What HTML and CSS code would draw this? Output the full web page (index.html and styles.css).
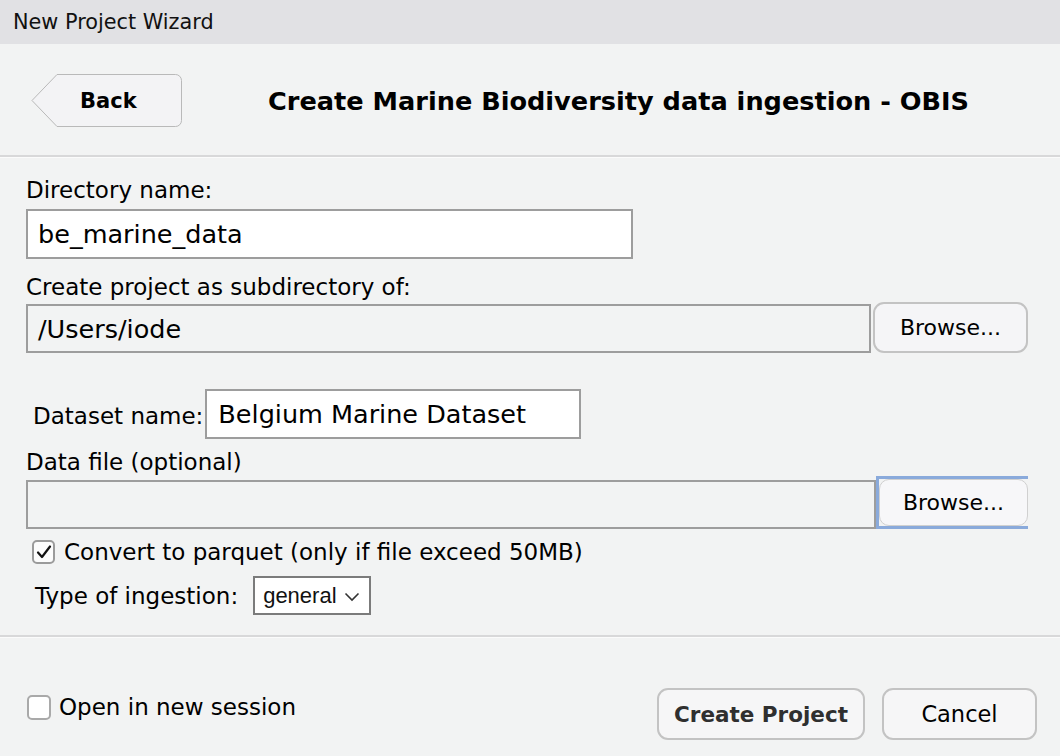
FILE: index.html
```html
<!DOCTYPE html>
<html lang="en">
<head>
<meta charset="utf-8">
<title>New Project Wizard</title>
<link rel="stylesheet" href="styles.css">
</head>
<body>
<div class="window">
  <div class="titlebar">New Project Wizard</div>
  <div class="header">
    <button class="back">
      <svg class="back-shape" width="152" height="54" viewBox="0 0 152 54">
        <path d="M26 0.5 H144.5 a6 6 0 0 1 6 6 V46.5 a6 6 0 0 1 -6 6 H26 L1 26.5 Z" fill="#f3f3f5" stroke="#b9b9b9" stroke-width="1"/>
      </svg>
      <span class="back-label">Back</span>
    </button>
    <h1 class="title">Create Marine Biodiversity data ingestion - OBIS</h1>
  </div>
  <div class="sep"></div>
  <div class="form">
    <div class="lbl l1">Directory name:</div>
    <div class="field white dir">be_marine_data</div>
    <div class="lbl l2">Create project as subdirectory of:</div>
    <div class="row r2">
      <div class="field path">/Users/iode</div>
      <button class="btn browse">Browse...</button>
    </div>
    <div class="row ds">
      <span class="lbl">Dataset name:</span>
      <div class="field white dsname">Belgium Marine Dataset</div>
    </div>
    <div class="lbl l3">Data file (optional)</div>
    <div class="row r4">
      <div class="field file"></div>
      <div class="focus"><button class="btn browse2">Browse...</button></div>
    </div>
    <div class="check-row">
      <span class="cb checked"><svg width="16" height="14" viewBox="0 0 16 14"><polyline points="2,7.5 6,12 14,1.5" fill="none" stroke="#111" stroke-width="2.2" stroke-linecap="round" stroke-linejoin="round"/></svg></span>
      <span class="lbl">Convert to parquet (only if file exceed 50MB)</span>
    </div>
    <div class="type-row">
      <span class="lbl">Type of ingestion:</span>
      <div class="select">general
        <svg class="chev" width="16" height="10" viewBox="0 0 16 10"><polyline points="1.5,1.5 8,8 14.5,1.5" fill="none" stroke="#333" stroke-width="1.6"/></svg>
      </div>
    </div>
  </div>
  <div class="sep"></div>
  <div class="footer">
    <div class="open-row">
      <span class="cb"></span>
      <span class="lbl">Open in new session</span>
    </div>
    <div class="actions">
      <button class="btn create">Create Project</button>
      <button class="btn cancel">Cancel</button>
    </div>
  </div>
</div>
</body>
</html>
```

FILE: styles.css
```css
* { box-sizing: border-box; }
html, body { margin: 0; padding: 0; }
body {
  width: 1060px;
  height: 756px;
  overflow: hidden;
  background: #f2f3f3;
  font-family: "DejaVu Sans", "Liberation Sans", sans-serif;
  color: #000;
}
.window { width: 1060px; height: 756px; display: flex; flex-direction: column; }

.titlebar {
  height: 44px;
  background: #e1e1e4;
  padding-left: 13px;
  display: flex;
  align-items: center;
  font-size: 20.8px;
  color: #111;
}

.header {
  height: 111px;
  display: flex;
  align-items: center;
  padding-left: 31px;
}
.back {
  position: relative;
  width: 152px;
  height: 54px;
  margin-top: 3px;
  padding: 0;
  border: none;
  background: transparent;
  font-family: inherit;
  cursor: pointer;
}
.back-shape { position: absolute; left: 0; top: 0; }
.back-label {
  position: relative;
  display: block;
  font-size: 21px;
  font-weight: bold;
  margin-left: 49px;
  text-align: left;
  color: #000;
}
.title {
  margin: 3px 0 0 85px;
  font-size: 25.6px;
  font-weight: bold;
  color: #000;
}

.sep {
  height: 3px;
  border-top: 2px solid #d8d8d9;
  border-bottom: 1px solid #fbfbfb;
  flex: none;
}

.form {
  padding: 0 32px 20px 26px;
  display: flex;
  flex-direction: column;
}
.lbl { font-size: 23px; line-height: 26px; white-space: nowrap; }
.l1 { margin-top: 19px; }
.field {
  border: 2px solid #9d9d9d;
  font-size: 25.5px;
  padding-left: 10px;
  display: flex;
  align-items: center;
  white-space: nowrap;
}
.white { background: #fff; }
.dir { margin-top: 6px; width: 607px; height: 50px; }
.l2 { margin-top: 15px; }
.row { display: flex; }
.r2 { margin-top: 2px; align-items: flex-start; }
.path { margin-top: 2px; width: 845px; height: 49px; background: #f2f3f3; }

.btn {
  font-family: inherit;
  font-size: 22px;
  color: #000;
  background: #f5f5f7;
  border: 2px solid #c3c3c3;
  border-radius: 11px;
  padding: 0;
}
.browse { margin-left: 2px; width: 155px; height: 51px; }

.ds { margin-top: 36px; align-items: center; padding-left: 7px; }
.ds .lbl { margin-top: 3px; }
.dsname { margin-left: 2px; width: 376px; height: 50px; padding-left: 11px; }

.l3 { margin-top: 10px; }
.r4 { margin-top: 1px; align-items: flex-start; }
.file { margin-top: 4px; width: 850px; height: 49px; background: #f2f3f3; }
.focus {
  width: 152px;
  height: 53px;
  border: 3px solid #8aaadb;
  border-right: none;
  display: flex;
}
.browse2 {
  width: 149px;
  height: 47px;
  border: 1px solid #d0d0d0;
  border-radius: 10px;
  background: #f7f7f9;
}

.check-row {
  margin-top: 10px;
  padding-left: 6px;
  display: flex;
  align-items: center;
  gap: 9px;
}
.cb {
  width: 24px;
  height: 24px;
  border: 2px solid #a9a9a9;
  border-radius: 5px;
  background: #fff;
  display: flex;
  align-items: center;
  justify-content: center;
  flex: none;
}
.checked { width: 23px; height: 24px; border-color: #9b9b9b; background: #fcfcfc; }

.type-row {
  margin-top: 11px;
  padding-left: 9px;
  display: flex;
  align-items: center;
}
.select {
  margin-left: 15px;
  width: 118px;
  height: 39px;
  background: #fff;
  border: 2px solid #7b7b7b;
  font-family: "Liberation Sans", Arial, sans-serif;
  font-size: 22px;
  padding-left: 8px;
  display: flex;
  align-items: center;
  gap: 7px;
  color: #111;
}
.chev { margin-top: 2px; }

.footer {
  display: flex;
  justify-content: space-between;
  align-items: flex-start;
  padding: 50px 23px 0 27px;
}
.open-row {
  margin-top: 6px;
  display: flex;
  align-items: center;
  gap: 8px;
}
.open-row .cb { width: 24px; height: 25px; }
.actions { display: flex; gap: 17px; }
.create {
  width: 208px;
  height: 52px;
  font-weight: bold;
  font-size: 21.5px;
  color: #2f2f2f;
  background: #f6f6f7;
}
.cancel {
  width: 155px;
  height: 52px;
  font-size: 22.5px;
  background: #f6f6f7;
}
```
